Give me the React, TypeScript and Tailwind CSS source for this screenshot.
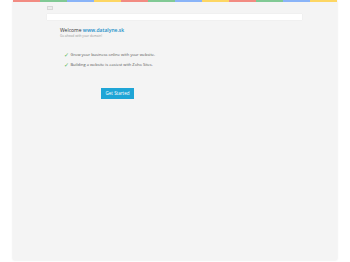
import React from "react";

const colors = ["#f28b82", "#81c995", "#8ab4f8", "#fdd663"];

export default function App() {
  const segs = Array.from({ length: 12 });
  return (
    <div className="w-[350px] h-[262px] bg-white overflow-hidden" style={{ fontFamily: '"Open Sans", "Liberation Sans", sans-serif' }}>
      <div className="ml-[13px] w-[324px] h-[260px] bg-[#f4f4f4] shadow-[0_0_2px_rgba(0,0,0,0.12)] flex flex-col">
        <div className="flex h-[1.5px] w-full">
          {segs.map((_, i) => (
            <div key={i} className="h-full flex-1" style={{ backgroundColor: colors[i % 4] }} />
          ))}
        </div>
        <div className="ml-[34px] mt-[4px] w-[6px] h-[4px] border border-[#d8d8d8] bg-[#ececec]" />
        <div className="ml-[34px] mt-[4px] w-[255px] h-[6px] bg-white shadow-[0_0_1px_rgba(0,0,0,0.1)]" />
        <div className="ml-[47px] mt-[7px] flex flex-col">
          <div className="text-[5px] leading-[6px] text-[#333]">
            Welcome <span className="text-[#1a8fc9] font-semibold">www.datalyne.sk</span>
          </div>
          <div className="text-[3.2px] leading-[4px] text-[#999] mt-[1.5px]">Go ahead with your domain!</div>
          <div className="mt-[15px] flex flex-col gap-[6px] ml-[3.5px]">
            <div className="flex items-center gap-[2px] text-[4px] leading-[4px] text-[#555]">
              <span className="text-[#5cb85c] text-[5.5px]">✓</span>
              <span>Grow your business online with your website.</span>
            </div>
            <div className="flex items-center gap-[2px] text-[4px] leading-[4px] text-[#555]">
              <span className="text-[#5cb85c] text-[5.5px]">✓</span>
              <span>Building a website is easiest with Zoho Sites.</span>
            </div>
          </div>
          <div className="ml-[41px] mt-[21px] w-[33px] h-[11px] bg-[#1fa5d6] text-white text-[4.5px] flex items-center justify-center">
            Get Started
          </div>
        </div>
      </div>
    </div>
  );
}
